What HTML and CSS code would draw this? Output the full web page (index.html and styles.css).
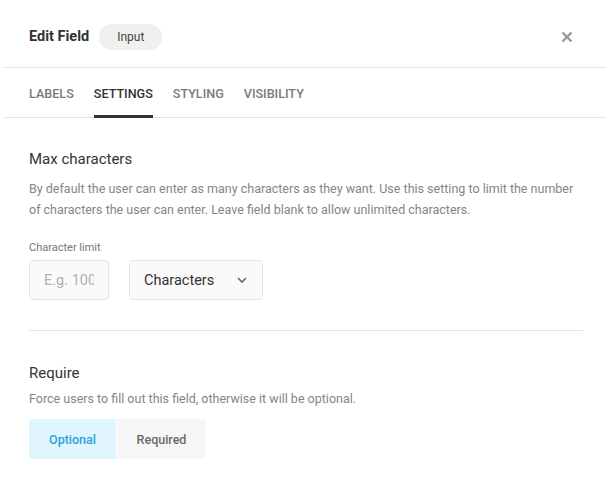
FILE: index.html
```html
<!DOCTYPE html>
<html>
<head>
<meta charset="utf-8">
<link rel="stylesheet" href="styles.css">
</head>
<body>
<div class="dialog">
  <div class="header">
    <div class="title">Edit Field</div>
    <span class="pill">Input</span>
    <button class="close" aria-label="Close">
      <svg width="12" height="12" viewBox="0 0 12 12"><path d="M1.5 1.5 L10.5 10.5 M10.5 1.5 L1.5 10.5" stroke="#9a9a9a" stroke-width="2.4" stroke-linecap="butt"/></svg>
    </button>
  </div>
  <div class="tabs">
    <div class="tab">LABELS</div>
    <div class="tab active">SETTINGS</div>
    <div class="tab">STYLING</div>
    <div class="tab">VISIBILITY</div>
  </div>
  <div class="content">
    <section class="section">
      <h3 class="sec-title">Max characters</h3>
      <p class="desc">By default the user can enter as many characters as they want. Use this setting to limit the number of characters the user can enter. Leave field blank to allow unlimited characters.</p>
      <div class="field-label">Character limit</div>
      <div class="row">
        <div class="input"><span class="placeholder">E.g. 100</span></div>
        <div class="select">
          <span>Characters</span>
          <svg width="10" height="6" viewBox="0 0 10 6"><path d="M1 1 L5 5 L9 1" fill="none" stroke="#666" stroke-width="1.6"/></svg>
        </div>
      </div>
    </section>
    <div class="divider"></div>
    <section class="section second">
      <h3 class="sec-title">Require</h3>
      <p class="desc">Force users to fill out this field, otherwise it will be optional.</p>
      <div class="toggle">
        <div class="opt selected">Optional</div>
        <div class="opt">Required</div>
      </div>
    </section>
  </div>
</div>
</body>
</html>
```
FILE: styles.css
```css
* { box-sizing: border-box; }
body {
  margin: 0;
  background: #fff;
  font-family: Roboto, "Liberation Sans", sans-serif;
  color: #333;
}
.dialog {
  margin: 0 4px;
}
.header {
  height: 68px;
  display: flex;
  align-items: center;
  padding: 6px 25px 0 25px;
  border-bottom: 1px solid #e4e4e4;
}
.title {
  font-size: 14.5px;
  font-weight: 700;
  color: #333;
}
.pill {
  margin-left: 10px;
  height: 26px;
  padding: 0 18px;
  border-radius: 13px;
  background: #f0f0f0;
  font-size: 12px;
  color: #444;
  display: inline-flex;
  align-items: center;
}
.close {
  margin-left: auto;
  margin-right: 8px;
  border: 0;
  background: none;
  padding: 0;
  width: 12px;
  height: 12px;
  display: flex;
}
.tabs {
  display: flex;
  gap: 20px;
  padding: 0 25px;
  height: 50px;
  border-bottom: 1px solid #e4e4e4;
}
.tab {
  font-size: 12.6px;
  font-weight: 500;
  color: #7a7a7a;
  display: flex;
  align-items: center;
  border-bottom: 3px solid transparent;
  margin-bottom: -1px;
  padding-top: 3px;
}
.tab.active {
  color: #333;
  border-bottom-color: #333;
}
.content {
  padding: 0 23px 0 25px;
}
.section {
  padding-top: 31px;
}
.sec-title {
  margin: 0;
  font-size: 15px;
  font-weight: 400;
  color: #333;
  line-height: 20px;
}
.desc {
  margin: 9px 0 0;
  font-size: 12.5px;
  line-height: 21px;
  color: #858585;
}
.field-label {
  margin-top: 21px;
  font-size: 11px;
  color: #777;
  line-height: 14px;
}
.row {
  margin-top: 5px;
  display: flex;
  gap: 20px;
}
.input {
  width: 80px;
  height: 40px;
  border: 1px solid #e4e4e4;
  border-radius: 4px;
  background: #fafafa;
  display: flex;
  align-items: center;
  padding: 0 14px;
}
.placeholder {
  display: block;
  overflow: hidden;
  white-space: nowrap;
  font-size: 14.5px;
  color: #b0b0b0;
}
.select {
  width: 134px;
  height: 40px;
  border: 1px solid #e4e4e4;
  border-radius: 4px;
  background: #fafafa;
  display: flex;
  align-items: center;
  justify-content: space-between;
  padding: 0 15px 0 14px;
  font-size: 14.5px;
  color: #333;
}
.divider {
  margin-top: 30px;
  height: 1px;
  background: #e4e4e4;
}
.section.second {
  padding-top: 32px;
}
.section.second .desc {
  margin-top: 5px;
}
.toggle {
  margin-top: 10px;
  display: flex;
  gap: 1px;
}
.opt {
  height: 40px;
  width: 89px;
  display: flex;
  align-items: center;
  justify-content: center;
  font-size: 12.5px;
  font-weight: 500;
  color: #6a6a6a;
  background: #f6f6f6;
  border-radius: 0 4px 4px 0;
}
.opt.selected {
  width: 87px;
  background: #e1f5fe;
  color: #29a3dc;
  border-radius: 4px 0 0 4px;
}
```
